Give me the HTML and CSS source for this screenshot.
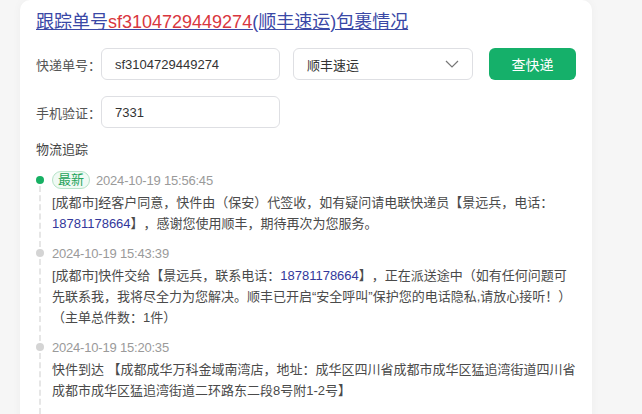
FILE: index.html
```html
<!DOCTYPE html>
<html lang="zh-CN">
<head>
  <meta charset="UTF-8" />
  <meta name="viewport" content="width=device-width, initial-scale=1.0"/>
  <title>快递查询</title>
  <link rel="stylesheet" href="styles.css">
</head>
<body>
  <div class="card">
    <h1 class="title">
      <a href="#">跟踪单号<span class="no">sf3104729449274</span>(顺丰速运)包裹情况</a>
    </h1>

    <div class="form-row">
      <label class="label">快递单号：</label>
      <input type="text" class="input" value="sf3104729449274" />
      <div class="select">
        <span>顺丰速运</span>
        <svg width="14" height="8" viewBox="0 0 14 8"><path d="M1 1l6 6 6-6" fill="none" stroke="#777" stroke-width="1.2"/></svg>
      </div>
      <button class="btn">查快递</button>
    </div>

    <div class="form-row">
      <label class="label">手机验证：</label>
      <input type="text" class="input" value="7331" />
    </div>

    <div class="section-title">物流追踪</div>

    <ul class="timeline">
      <li class="item latest">
        <div class="item-head"><span class="tag">最新</span><span class="time">2024-10-19 15:56:45</span></div>
        <div class="item-body">[成都市]经客户同意，快件由（保安）代签收，如有疑问请电联快递员【景远兵，电话：<a href="#" class="tel">18781178664</a>】，感谢您使用顺丰，期待再次为您服务。</div>
      </li>
      <li class="item">
        <div class="item-head"><span class="time">2024-10-19 15:43:39</span></div>
        <div class="item-body">[成都市]快件交给【景远兵，联系电话：<a href="#" class="tel">18781178664</a>】，正在派送途中（如有任何问题可先联系我，我将尽全力为您解决。顺丰已开启“安全呼叫”保护您的电话隐私,请放心接听！）（主单总件数：1件）</div>
      </li>
      <li class="item">
        <div class="item-head"><span class="time">2024-10-19 15:20:35</span></div>
        <div class="item-body">快件到达 【成都成华万科金域南湾店，地址：成华区四川省成都市成华区猛追湾街道四川省成都市成华区猛追湾街道二环路东二段8号附1-2号】</div>
      </li>
    </ul>

    <div class="more"><span class="arrow">›</span><a href="#">查看更多</a></div>
  </div>
</body>
</html>
```

FILE: styles.css
```css
body {
  margin: 0;
  background: #f6f6f6;
  font-family: "Liberation Sans", "Noto Sans CJK SC", sans-serif;
  color: #4a4a4a;
  text-spacing-trim: space-all;
}
.card {
  width: 541px;
  margin-left: 20px;
  padding: 10px 15px 20px 16px;
  background: #fff;
  border-radius: 10px;
  box-shadow: 0 0 10px rgba(0, 0, 0, 0.04);
}
.title {
  margin: 0;
  font-size: 18px;
  font-weight: normal;
  line-height: 24px;
}
.title a {
  color: #3a48a6;
  text-decoration: underline;
}
.title .no {
  color: #d9363e;
}
.form-row {
  display: flex;
  align-items: center;
  margin-top: 14px;
}
.form-row + .form-row {
  margin-top: 16px;
}
.label {
  width: 65px;
  font-size: 13px;
  color: #555;
}
.input {
  width: 179px;
  height: 32px;
  box-sizing: border-box;
  padding: 0 13px;
  border: 1px solid #dedfe3;
  border-radius: 6px;
  font-family: inherit;
  font-size: 13px;
  color: #333;
  outline: none;
}
.select {
  display: flex;
  align-items: center;
  justify-content: space-between;
  width: 180px;
  height: 32px;
  box-sizing: border-box;
  margin-left: 13px;
  padding: 0 13px 0 13px;
  border: 1px solid #dedfe3;
  border-radius: 6px;
  font-size: 13px;
  color: #333;
}
.btn {
  width: 87px;
  height: 32px;
  margin-left: 16px;
  border: none;
  border-radius: 6px;
  background: #15b06a;
  color: #fff;
  font-family: inherit;
  font-size: 14px;
  cursor: pointer;
}
.section-title {
  margin-top: 12px;
  font-size: 13px;
  line-height: 20px;
  color: #444;
}
.timeline {
  list-style: none;
  margin: 10px 0 0;
  padding: 0;
}
.item {
  position: relative;
  padding: 0 0 9px 16px;
}
.item::before {
  content: "";
  position: absolute;
  left: 0;
  top: 6px;
  width: 8px;
  height: 8px;
  border-radius: 50%;
  background: #d4d4d4;
}
.item::after {
  content: "";
  position: absolute;
  left: 3px;
  top: 16px;
  bottom: -4px;
  border-left: 2px dashed #e6e6e6;
}
.item.latest::before {
  background: #17b063;
}
.item-head {
  display: flex;
  align-items: center;
  height: 20px;
}
.tag {
  height: 16px;
  line-height: 16px;
  padding: 0 5px;
  margin-right: 6px;
  border: 1px solid #b5e3c8;
  border-radius: 9px;
  background: #f0faf4;
  color: #23a35a;
  font-size: 13px;
}
.time {
  font-size: 13px;
  letter-spacing: -0.2px;
  color: #9a9a9a;
}
.item-body {
  margin-top: 2px;
  font-size: 13px;
  line-height: 21px;
  color: #4a4a4a;
}
.tel {
  color: #33389b;
  text-decoration: none;
}
.more {
  margin-top: 2px;
  padding-left: 6px;
  font-size: 13px;
  line-height: 20px;
}
.more .arrow {
  color: #333;
  margin-right: 4px;
}
.more a {
  color: #3a48a6;
}
```
